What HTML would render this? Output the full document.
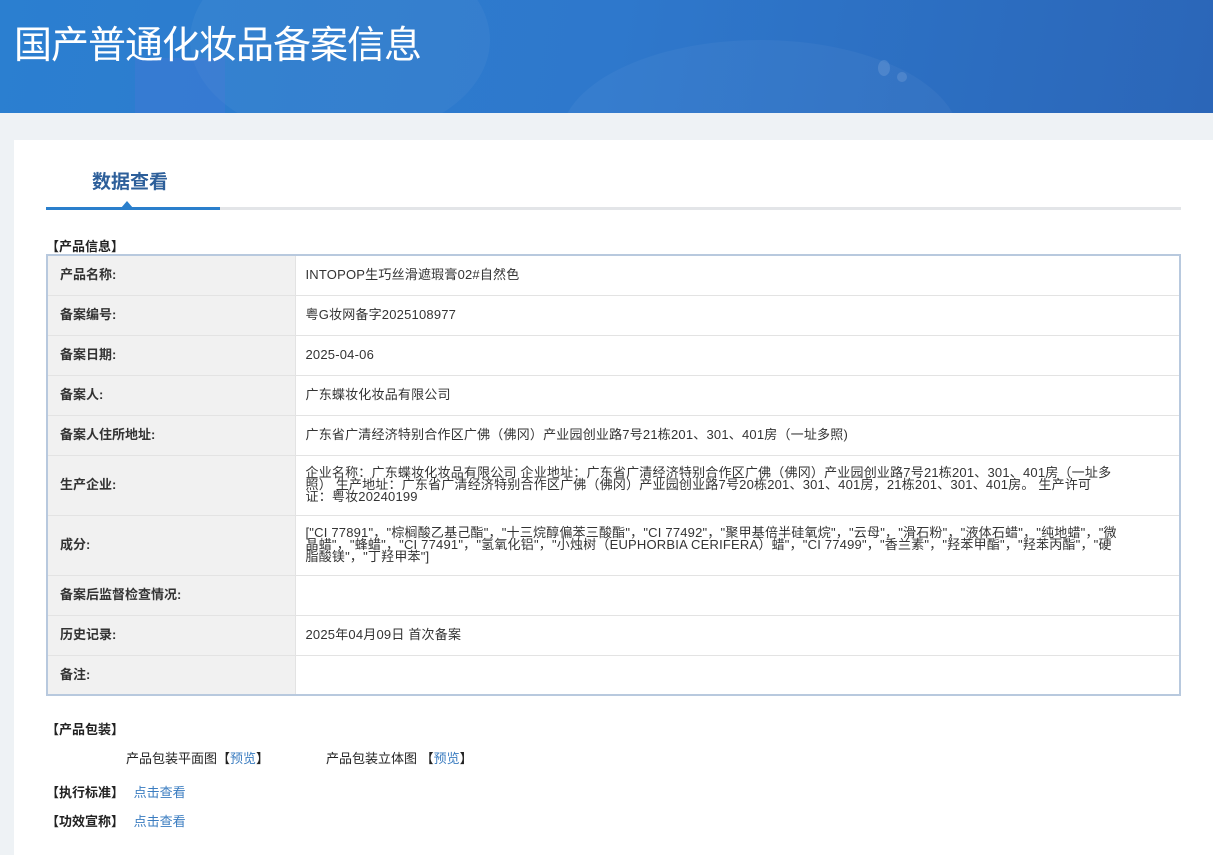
<!DOCTYPE html>
<html><head><meta charset="utf-8"><style>
*{margin:0;padding:0;box-sizing:border-box}
body{width:1213px;height:855px;overflow:hidden;background:#eef2f5;font-family:"Liberation Sans","Noto Sans CJK SC",sans-serif;font-size:13px;color:#333;position:relative}
.hdr{position:absolute;left:0;top:0;width:1213px;height:113px;background:linear-gradient(100deg,#2b7fd0 0%,#2e78cc 50%,#2b66b8 100%);overflow:hidden}
.hdr h1{position:absolute;left:14px;top:14px;font-size:38px;font-weight:normal;color:#fff;letter-spacing:-1px;font-family:"Noto Sans CJK SC",sans-serif}
.blob{position:absolute;border-radius:50%;background:rgba(255,255,255,.04)}
.card{position:absolute;left:14px;top:140px;width:1199px;height:715px;background:#fff}
.tab{position:absolute;left:92px;top:167px;font-size:19px;font-weight:bold;color:#2d5f9a}
.line{position:absolute;left:46px;top:207px;width:1135px;height:3px;background:#e3e5e8}
.line b{position:absolute;left:0;top:0;width:174px;height:3px;background:#2a7fcc}
.tri{position:absolute;left:121px;top:201px;width:0;height:0;border-left:6px solid transparent;border-right:6px solid transparent;border-bottom:7px solid #2a7fcc}
.sec{position:absolute;left:46px;font-weight:bold;color:#222}
table{position:absolute;left:46px;top:254px;width:1135px;border-collapse:collapse;border:2px solid #b8c9de}
td{border-top:1px solid #e3e3e3;height:40px;vertical-align:middle;line-height:12px}
td.l{width:248px;background:#f1f1f1;font-weight:bold;padding-left:12px;color:#333;border-right:1px solid #e3e3e3}
td.v{padding-left:10px;padding-right:62px;letter-spacing:0.2px}
a{color:#3a7cc0;text-decoration:none}
</style></head><body>
<div class="hdr">
<div class="blob" style="left:190px;top:-60px;width:300px;height:200px"></div>
<div class="blob" style="left:560px;top:40px;width:400px;height:200px"></div>
<div style="position:absolute;left:135px;top:58px;width:90px;height:60px;background:rgba(80,120,220,.3)"></div>
<div class="blob" style="left:878px;top:60px;width:12px;height:16px;background:rgba(255,255,255,.12)"></div>
<div class="blob" style="left:897px;top:72px;width:10px;height:10px;background:rgba(255,255,255,.12)"></div>
<h1>国产普通化妆品备案信息</h1>
</div>
<div class="card"></div>
<div class="tab">数据查看</div>
<div class="line"><b></b></div>
<div class="tri"></div>
<div class="sec" style="top:236px;">【产品信息】</div>
<table>
<tr><td class="l">产品名称:</td><td class="v">INTOPOP生巧丝滑遮瑕膏02#自然色</td></tr>
<tr><td class="l">备案编号:</td><td class="v">粤G妆网备字2025108977</td></tr>
<tr><td class="l">备案日期:</td><td class="v">2025-04-06</td></tr>
<tr><td class="l">备案人:</td><td class="v">广东蝶妆化妆品有限公司</td></tr>
<tr><td class="l">备案人住所地址:</td><td class="v">广东省广清经济特别合作区广佛（佛冈）产业园创业路7号21栋201、301、401房（一址多照)</td></tr>
<tr><td class="l" style="height:60px">生产企业:</td><td class="v">企业名称：广东蝶妆化妆品有限公司 企业地址：广东省广清经济特别合作区广佛（佛冈）产业园创业路7号21栋201、301、401房（一址多照） 生产地址：广东省广清经济特别合作区广佛（佛冈）产业园创业路7号20栋201、301、401房，21栋201、301、401房。 生产许可证：粤妆20240199</td></tr>
<tr><td class="l" style="height:60px">成分:</td><td class="v">["CI 77891"，"棕榈酸乙基己酯"，"十三烷醇偏苯三酸酯"，"CI 77492"，"聚甲基倍半硅氧烷"，"云母"，"滑石粉"，"液体石蜡"，"纯地蜡"，"微晶蜡"，"蜂蜡"，"CI 77491"，"氢氧化铝"，"小烛树（EUPHORBIA CERIFERA）蜡"，"CI 77499"，"香兰素"，"羟苯甲酯"，"羟苯丙酯"，"硬脂酸镁"，"丁羟甲苯"]</td></tr>
<tr><td class="l">备案后监督检查情况:</td><td class="v"></td></tr>
<tr><td class="l">历史记录:</td><td class="v">2025年04月09日 首次备案</td></tr>
<tr><td class="l">备注:</td><td class="v"></td></tr>
</table>
<div class="sec" style="top:719px;">【产品包装】</div>
<div style="position:absolute;left:126px;top:748px;color:#222">产品包装平面图【<a>预览</a>】</div>
<div style="position:absolute;left:326px;top:748px;color:#222">产品包装立体图 【<a>预览</a>】</div>
<div class="sec" style="top:782px;">【执行标准】 <a style="font-weight:normal;margin-left:6px">点击查看</a></div>
<div class="sec" style="top:811px;">【功效宣称】 <a style="font-weight:normal;margin-left:6px">点击查看</a></div>
</body></html>
